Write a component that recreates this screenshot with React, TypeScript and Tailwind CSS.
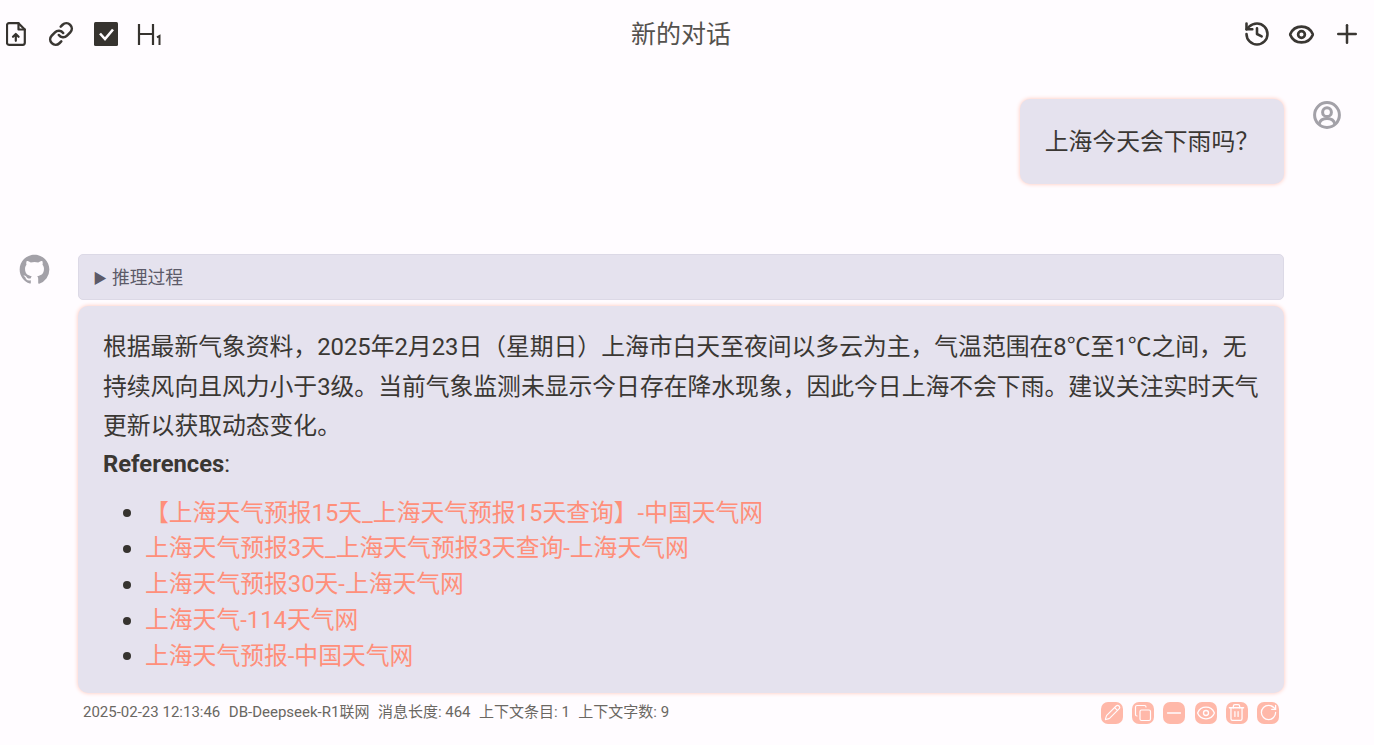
import { History, Eye, Plus, Link, Pencil, Copy, Minus, Trash2, RotateCw } from 'lucide-react'

const links = [
  '【上海天气预报15天_上海天气预报15天查询】-中国天气网',
  '上海天气预报3天_上海天气预报3天查询-上海天气网',
  '上海天气预报30天-上海天气网',
  '上海天气-114天气网',
  '上海天气预报-中国天气网',
]

const stats = ['DB-Deepseek-R1联网', '消息长度: 464', '上下文条目: 1', '上下文字数: 9']

const actions = [
  { Icon: Pencil, size: 'h-[17px] w-[17px]' },
  { Icon: Copy, size: 'h-[18px] w-[18px]' },
  { Icon: Minus, size: 'h-[22px] w-[22px]' },
  { Icon: Eye, size: 'h-[20px] w-[20px]' },
  { Icon: Trash2, size: 'h-[19px] w-[19px]' },
  { Icon: RotateCw, size: 'h-[19px] w-[19px]' },
]

function GithubIcon() {
  return (
    <svg viewBox="0 0 24 24" className="h-[31px] w-[31px]" fill="#a3a1a8">
      <path d="M12 .5C5.65.5.5 5.65.5 12c0 5.08 3.29 9.39 7.86 10.91.58.1.79-.25.79-.55v-2.03c-3.2.7-3.87-1.37-3.87-1.37-.52-1.33-1.28-1.68-1.28-1.68-1.04-.71.08-.7.08-.7 1.15.08 1.76 1.18 1.76 1.18 1.03 1.76 2.69 1.25 3.34.96.1-.74.4-1.25.73-1.54-2.55-.29-5.24-1.28-5.24-5.69 0-1.26.45-2.28 1.18-3.09-.12-.29-.51-1.46.11-3.05 0 0 .96-.31 3.16 1.18a11 11 0 0 1 5.76 0c2.2-1.49 3.16-1.18 3.16-1.18.62 1.59.23 2.76.11 3.05.73.81 1.18 1.83 1.18 3.09 0 4.42-2.69 5.39-5.25 5.68.41.36.78 1.05.78 2.12v3.14c0 .31.21.66.8.55A11.5 11.5 0 0 0 23.5 12C23.5 5.65 18.35.5 12 .5z" />
    </svg>
  )
}

function UserCircleIcon() {
  return (
    <svg viewBox="0 0 28 28" className="h-[28px] w-[28px]" fill="none" stroke="#a3a1a8" strokeWidth="3">
      <circle cx="14" cy="14" r="12.4" />
      <circle cx="14" cy="11.2" r="4.4" />
      <path d="M6.2 22.8c1-3.6 4-5.2 7.8-5.2s6.8 1.6 7.8 5.2" />
    </svg>
  )
}

function FileUploadIcon() {
  return (
    <svg viewBox="0 0 20 24" className="h-[24px] w-[20px]" fill="none" stroke="#36332f" strokeWidth="2.2" strokeLinejoin="round" strokeLinecap="round">
      <path d="M3 1.2h9.5l6.3 6.3v13.3a2 2 0 0 1-2 2H3a2 2 0 0 1-2-2V3.2a2 2 0 0 1 2-2z" />
      <path d="M12.5 1.2v6.3h6.3" />
      <path d="M9.8 18.8v-6.6M7 14.8l2.8-2.8 2.8 2.8" />
    </svg>
  )
}

function CheckSquareIcon() {
  return (
    <svg viewBox="0 0 24 24" className="h-[24px] w-[24px]">
      <rect width="24" height="24" rx="1.5" fill="#36332f" />
      <path d="M6 11.5l5 5.5 8-9.5" fill="none" stroke="#fffcff" strokeWidth="2.6" />
    </svg>
  )
}

function HeadingOneIcon() {
  return (
    <svg viewBox="0 0 26 24" className="h-[24px] w-[26px]" fill="none" stroke="#36332f" strokeWidth="2.2">
      <path d="M2 2v21M16 2v21M2 12h14" />
      <path d="M22.5 23v-9l-2.5 1.4" strokeWidth="2" />
    </svg>
  )
}

export default function App() {
  return (
    <div
      className="h-[745px] w-[1374px] overflow-hidden bg-[#fffcff] text-[#3a3733]"
      style={{ fontFamily: 'Roboto, "Noto Sans CJK SC", sans-serif' }}
    >
      {/* Top bar */}
      <header className="flex h-[68px] items-center justify-between pl-[6px] pr-[12px]">
        <div className="flex w-[294px] items-center">
          <FileUploadIcon />
          <Link className="ml-[22px] h-[26px] w-[26px]" strokeWidth={2.4} />
          <div className="ml-[20px]">
            <CheckSquareIcon />
          </div>
          <div className="ml-[19px]">
            <HeadingOneIcon />
          </div>
        </div>
        <div className="pt-[1px] text-[25px] text-[#55524e]">新的对话</div>
        <div className="flex w-[300px] items-center justify-end gap-[17px]">
          <History className="h-[28px] w-[28px]" strokeWidth={2.2} />
          <Eye className="h-[27px] w-[27px]" strokeWidth={2.4} />
          <Plus className="h-[30px] w-[30px]" strokeWidth={2} />
        </div>
      </header>

      {/* User message */}
      <div className="mt-[31px] flex items-start justify-end pr-[33px]">
        <div className="rounded-[10px] bg-[#e5e2ee] px-[25px] pb-[20px] pt-[22px] text-[23.8px] leading-[43px] shadow-[0_0_4px_#ffc4b6]">
          上海今天会下雨吗？
        </div>
        <div className="ml-[29px] mt-[2px]">
          <UserCircleIcon />
        </div>
      </div>

      {/* Assistant message */}
      <div className="mt-[70px] flex items-start pl-[19px] pr-[90px]">
        <div className="w-[59px] shrink-0">
          <GithubIcon />
        </div>
        <div className="min-w-0 flex-1">
          <div className="flex h-[46px] items-center rounded-[5px] border border-[#dcd9e6] bg-[#e5e2ee] pl-[14px] pt-[2px] text-[17.8px] text-[#5c5a68]">
            <span className="mr-[5px] text-[14px]">▶</span>
            推理过程
          </div>
          <div className="mt-[6px] rounded-[10px] bg-[#e5e2ee] px-[25px] pb-[19px] pt-[22px] text-[23.8px] shadow-[0_0_4px_#ffc4b6]">
            <p className="leading-[39.5px]">
              根据最新气象资料，2025年2月23日（星期日）上海市白天至夜间以多云为主，气温范围在8℃至1℃之间，无持续风向且风力小于3级。当前气象监测未显示今日存在降水现象，因此今日上海不会下雨。建议关注实时天气更新以获取动态变化。
            </p>
            <p className="leading-[35px]">
              <strong className="font-bold">References</strong>:
            </p>
            <ul className="mt-[14px] pl-[20px] leading-[35.75px]">
              {links.map((l) => (
                <li key={l} className="flex items-center">
                  <span className="mr-[14px] h-[8px] w-[8px] shrink-0 rounded-full bg-[#36332f]" />
                  <a className="text-[#ff8f7a]">{l}</a>
                </li>
              ))}
            </ul>
          </div>
          <div className="mt-[8px] flex items-center justify-between pl-[5px] pr-[5px]">
            <div className="flex gap-[8.5px] text-[15px] text-[#6a6762]">
              <span>2025-02-23 12:13:46</span>
              {stats.map((s) => (
                <span key={s}>{s}</span>
              ))}
            </div>
            <div className="flex gap-[9.2px]">
              {actions.map(({ Icon, size }, i) => (
                <div key={i} className="flex h-[22px] w-[22px] items-center justify-center rounded-[7px] bg-[#ffb8a9]">
                  <Icon className={`${size} text-[#fffcff]`} strokeWidth={1.6} />
                </div>
              ))}
            </div>
          </div>
        </div>
      </div>
    </div>
  )
}
